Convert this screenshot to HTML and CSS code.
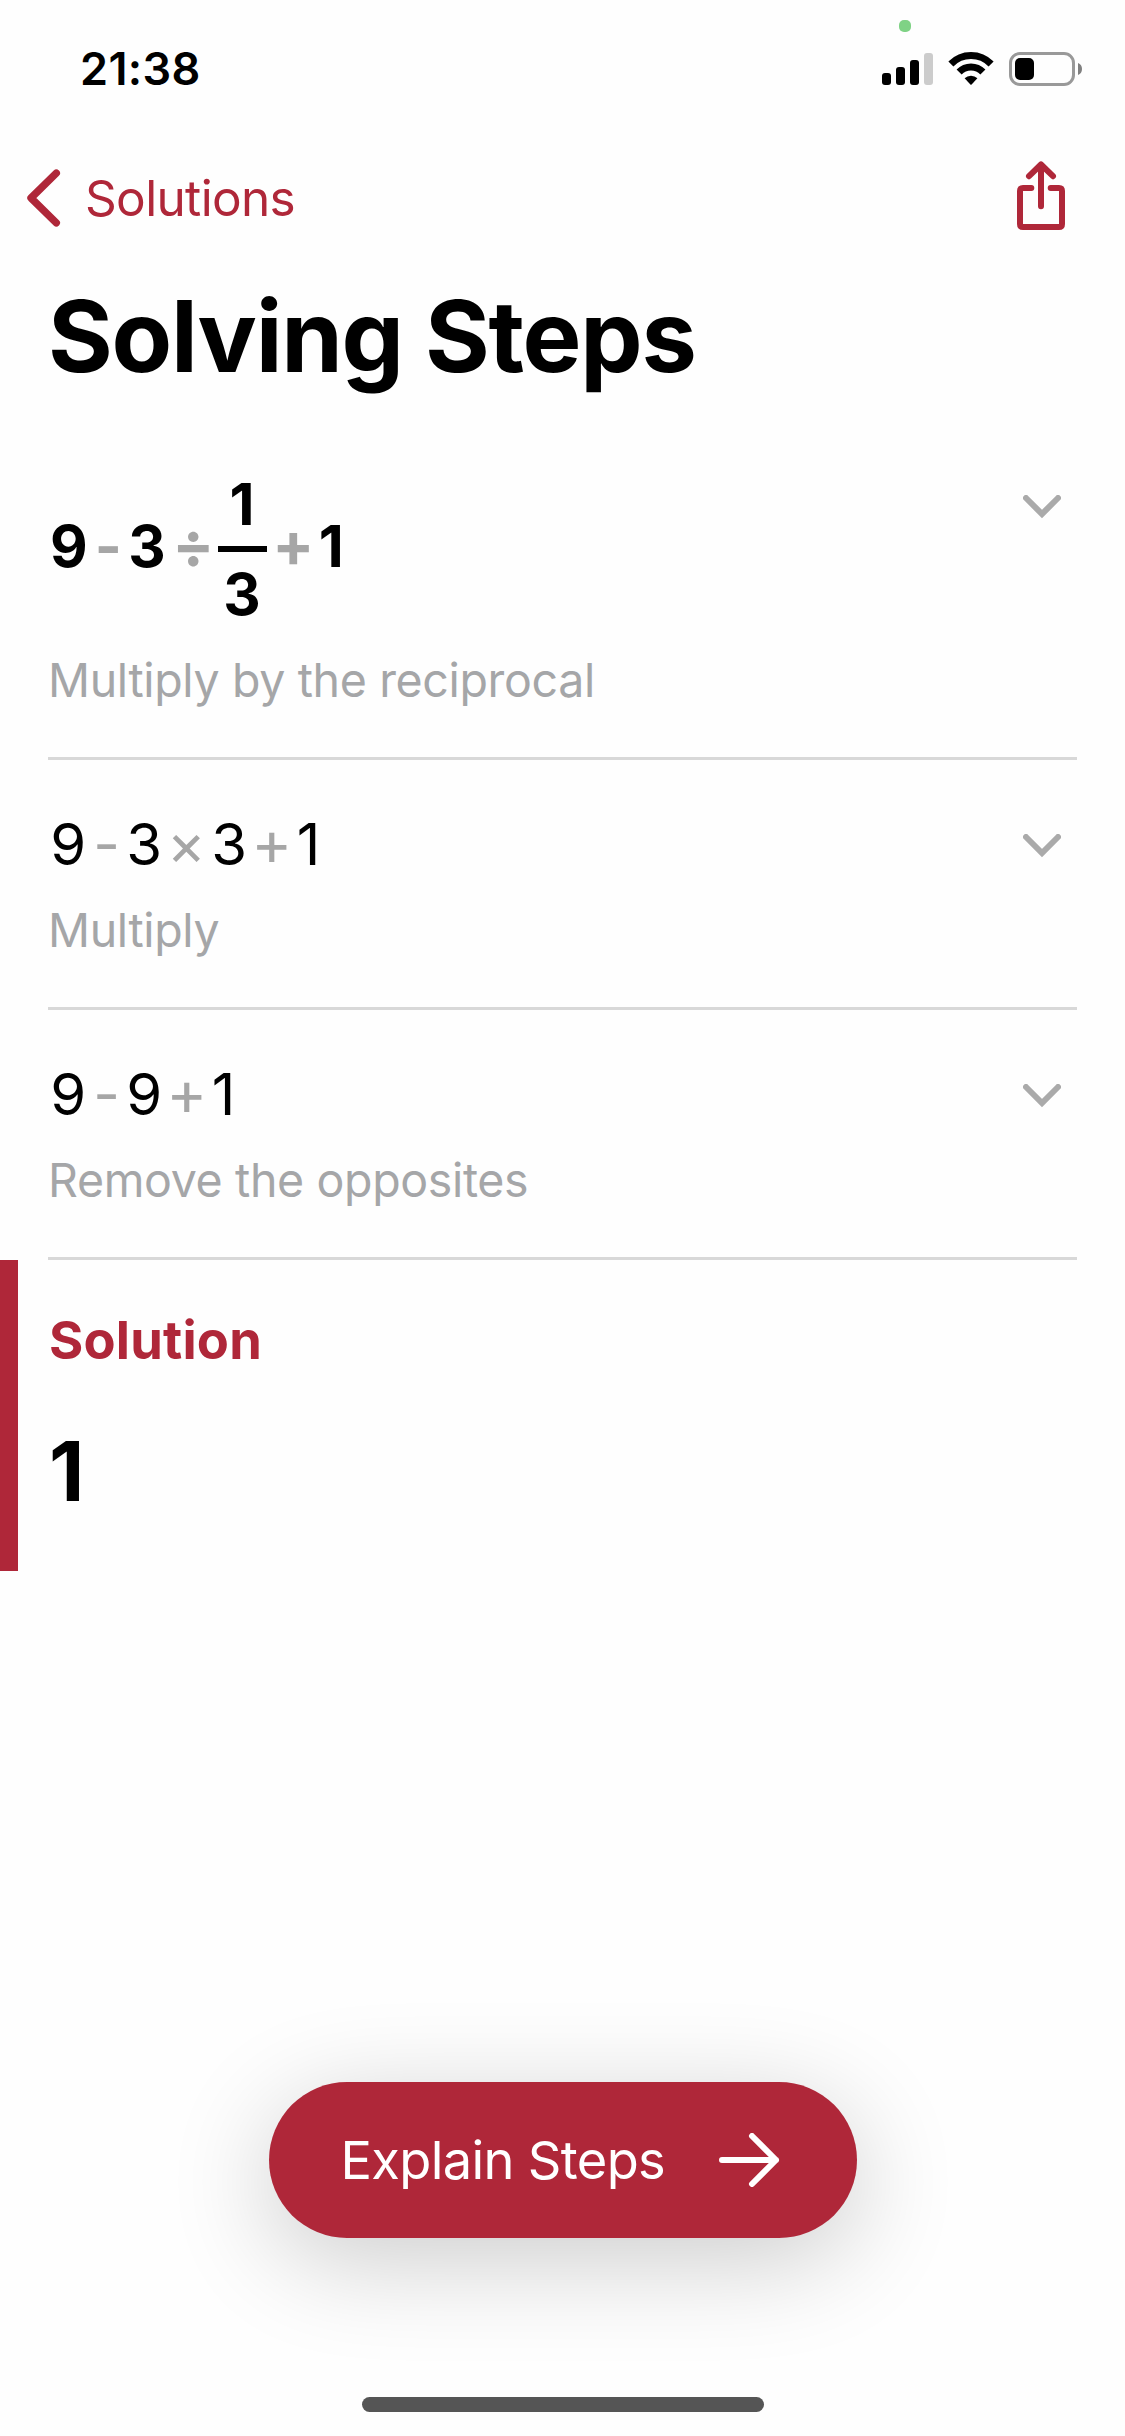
FILE: index.html
```
<!DOCTYPE html>
<html lang="en">
<head>
<meta charset="utf-8">
<title>Solving Steps</title>
<link rel="stylesheet" href="styles.css">
</head>
<body>
<div class="screen">
  <header class="status-bar">
    <span class="camera-dot"></span>
    <span class="time">21:38</span>
    <div class="indicators">
      <svg width="51" height="34" viewBox="0 0 51 34">
        <rect x="0" y="21" width="9" height="12" rx="3"/>
        <rect x="14" y="15" width="9" height="18" rx="3"/>
        <rect x="28" y="8" width="9" height="25" rx="3"/>
        <rect x="42" y="1" width="9" height="32" rx="3" fill="#ccc"/>
      </svg>
      <svg width="46" height="34" viewBox="0 0 46 34">
        <g fill="none" stroke="#000" stroke-width="7">
          <path d="M2.9 12.05A28 28 0 0 1 43.1 12.05"/>
          <path d="M11.1 20.04A16.5 16.5 0 0 1 34.9 20.04"/>
        </g>
        <path d="M16.6 26.3A9 9 0 0 1 29.4 26.3L23.6 32.5Q23 33.1 22.4 32.5Z"/>
      </svg>
      <svg width="73" height="34" viewBox="0 0 73 34">
        <rect x="1.5" y="1.5" width="63" height="31" rx="9.5" fill="none" stroke="#999" stroke-width="3"/>
        <rect x="6" y="6" width="19" height="22" rx="5"/>
        <path d="M69 11Q73 12.500 73 17T69 23Z" fill="#808080"/>
      </svg>
    </div>
  </header>

  <nav class="nav-bar">
    <a class="back">
      <svg width="34" height="58" viewBox="0 0 34 58" fill="none" stroke="currentColor" stroke-width="7.4" stroke-linecap="round" stroke-linejoin="round">
        <path d="M29.300 4.200L4 29L29.300 53.800"/>
      </svg>
      <span>Solutions</span>
    </a>
    <svg class="share" width="48" height="74" viewBox="0 0 48 74" fill="none" stroke="currentColor" stroke-width="6" stroke-linecap="round" stroke-linejoin="round">
      <path d="M14.300 27H6Q3 27 3 30V63Q3 66 6 66H42Q45 66 45 63V30Q45 27 42 27H33.700"/>
      <path d="M24 4V45.300M12 15.200L24 3.500L36 15.200"/>
    </svg>
  </nav>

  <h1 class="title">Solving Steps</h1>

  <main>
    <section class="steps">
      <article class="step step-lead">
        <div class="step-body">
          <div class="expression">
            <span>9</span><span class="op minus">-</span><span>3</span><span class="op divide">÷</span>
            <span class="fraction"><span>1</span><span class="bar"></span><span>3</span></span>
            <span class="op plus">+</span><span>1</span>
          </div>
          <p class="hint">Multiply by the reciprocal</p>
        </div>
        <svg class="chevron" width="38" height="24" viewBox="0 0 38 24"><path d="M3 3L19 19L35 3"/></svg>
      </article>
      <article class="step">
        <div class="step-body">
          <div class="expression">
            <span>9</span><span class="op minus">-</span><span>3</span><span class="op times">×</span><span>3</span><span class="op plus">+</span><span>1</span>
          </div>
          <p class="hint">Multiply</p>
        </div>
        <svg class="chevron" width="38" height="24" viewBox="0 0 38 24"><path d="M3 3L19 19L35 3"/></svg>
      </article>
      <article class="step">
        <div class="step-body">
          <div class="expression">
            <span>9</span><span class="op minus">-</span><span>9</span><span class="op plus">+</span><span>1</span>
          </div>
          <p class="hint">Remove the opposites</p>
        </div>
        <svg class="chevron" width="38" height="24" viewBox="0 0 38 24"><path d="M3 3L19 19L35 3"/></svg>
      </article>
    </section>

    <section class="solution">
      <h2>Solution</h2>
      <p class="answer">1</p>
    </section>
  </main>

  <footer class="footer">
    <button class="explain">
      <span>Explain Steps</span>
      <svg width="61" height="54" viewBox="0 0 61 54" fill="none" stroke="#fff" stroke-width="6" stroke-linecap="round" stroke-linejoin="round">
        <path d="M3 27H57M33 3L57 27L33 51"/>
      </svg>
    </button>
    <div class="home-indicator"></div>
  </footer>
</div>
</body>
</html>
```
FILE: styles.css
```
* {
  box-sizing: border-box;
  margin: 0;
  padding: 0;
}

body {
  background: #fefefe;
  color: #000;
  font-family: Inter, "Liberation Sans", sans-serif;
}

svg {
  display: block;
  flex: none;
}

.screen {
  display: flex;
  flex-direction: column;
  position: relative;
  width: 1125px;
  height: 2436px;
  overflow: hidden;
}

.status-bar {
  display: flex;
  align-items: center;
  justify-content: space-between;
  height: 132px;
  padding: 6px 43px 0 80px;
}

.camera-dot {
  position: absolute;
  top: 20px;
  left: 899px;
  width: 12px;
  height: 12px;
  border-radius: 5px;
  background: #7fd285;
}

.time {
  font-size: 45px;
  line-height: 54px;
  font-weight: 600;
  letter-spacing: 0.35px;
}

.indicators {
  display: flex;
  gap: 15px;
}

.nav-bar {
  display: flex;
  align-items: center;
  justify-content: space-between;
  height: 132px;
  padding: 0 60px 0 27px;
  color: #af2739;
}

.back {
  display: flex;
  align-items: center;
  gap: 24px;
  font-size: 49.5px;
  line-height: 60px;
  letter-spacing: -0.65px;
}

.title {
  margin-top: 12px;
  padding-left: 48px;
  font-size: 99px;
  line-height: 120px;
  font-weight: 700;
  letter-spacing: -1.27px;
}

.steps {
  margin-top: 25px;
  padding: 0 48px;
}

.step {
  display: flex;
  justify-content: space-between;
  align-items: flex-start;
  padding: 49px 0;
  border-bottom: 3px solid #d8d8d8;
}

.step-lead {
  padding-top: 47px;
}

.expression {
  display: flex;
  align-items: center;
  padding-left: 2.3px;
  font-size: 58px;
  line-height: 70px;
}

.step-lead .expression {
  padding-left: 2px;
  font-weight: 700;
}

.op {
  color: #a6a6a6;
}

.minus {
  margin: 0 6.4px 0 7px;
}

.times {
  margin: 0 5.5px 0 4.6px;
  font-size: 59px;
}

.plus {
  margin: 0 4.5px 0 4px;
  padding-bottom: 3px;
  font-size: 62px;
  line-height: 64px;
}

.divide {
  margin: 0 3.2px 0 6.6px;
  padding-bottom: 3px;
  font-size: 62px;
  line-height: 64px;
}

.step-lead .plus {
  margin-left: 5.7px;
}

.fraction {
  display: flex;
  flex-direction: column;
  align-items: center;
  width: 49px;
  padding-top: 6px;
  line-height: 60px;
}

.bar {
  align-self: stretch;
  height: 6px;
  margin: 12px 0;
  background: #000;
}

.hint {
  margin-top: 23px;
  color: #a5a6a8;
  font-size: 46.5px;
  line-height: 56px;
  letter-spacing: -0.35px;
}

.step-lead .hint {
  margin-top: 28px;
}

.chevron {
  margin: 25px 16px 0 0;
  fill: none;
  stroke: #aaa;
  stroke-width: 6px;
  stroke-linecap: round;
}

.step-lead .chevron {
  margin-top: 27px;
}

.solution {
  height: 311px;
  padding: 48px 0 0 31px;
  border-left: 18px solid #af2739;
}

.solution h2 {
  color: #af2739;
  font-size: 52.4px;
  line-height: 64px;
  font-weight: 700;
  letter-spacing: 0.2px;
}

.answer {
  margin-top: 50px;
  font-size: 82px;
  line-height: 100px;
  font-weight: 700;
}

.footer {
  display: flex;
  flex-direction: column;
  align-items: center;
  gap: 159px;
  margin-top: auto;
  padding-bottom: 24px;
}

.explain {
  display: flex;
  align-items: center;
  justify-content: space-between;
  width: 588px;
  height: 156px;
  padding: 0 77px 0 72px;
  border: 0;
  border-radius: 78px;
  background: #af2739;
  box-shadow: 0 22px 104px rgba(0, 0, 0, 0.2);
  color: #fff;
  font: 400 52.4px/64px Inter, "Liberation Sans", sans-serif;
  letter-spacing: -0.66px;
}

.home-indicator {
  width: 402px;
  height: 15px;
  border-radius: 8px;
  background: #555;
}
```
